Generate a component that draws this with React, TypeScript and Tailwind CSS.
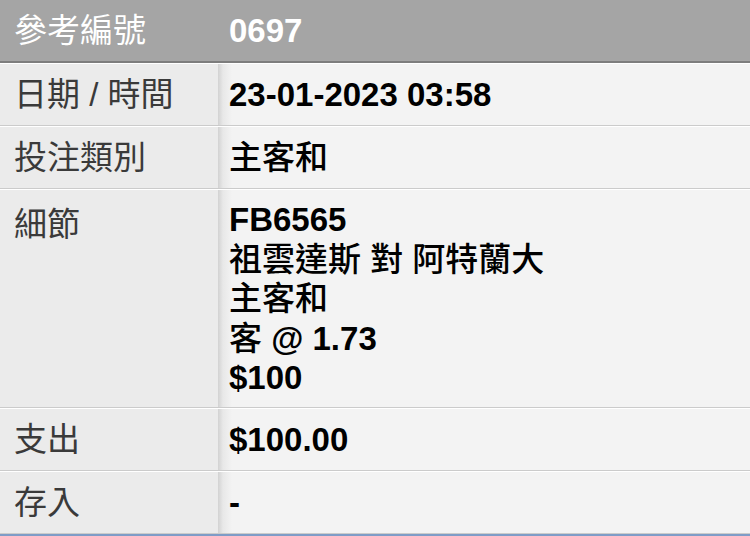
import React from "react";

const font = { fontFamily: '"Liberation Sans", "Noto Sans CJK TC", sans-serif' };

function Row({ label, children, tall }: { label: string; children: React.ReactNode; tall?: boolean }) {
  return (
    <div className="flex border-t border-t-white border-b border-b-[#cbcbcb]">
      <div
        className={`w-[218px] shrink-0 bg-[#ebebeb] pl-[14px] text-[33px] text-[#3a3a3a] ${
          tall ? "pt-[10px] h-[217px]" : "h-[61px] flex items-center"
        }`}
      >
        {label}
      </div>
      <div
        className={`flex-1 bg-[linear-gradient(to_right,#d2d2d2,#e8e8e8_5px,#f3f3f3_14px)] pl-[11px] text-[33px] font-bold text-black ${
          tall ? "pt-[10px] h-[217px] leading-[39.5px]" : "h-[61px] flex items-center"
        }`}
      >
        {children}
      </div>
    </div>
  );
}

const C = ({ children }: { children: React.ReactNode }) => <span className="font-medium">{children}</span>;

export default function App() {
  return (
    <div className="w-[750px] h-[536px] overflow-hidden bg-[#f3f3f3]" style={font}>
      <div className="h-[63px] flex items-center bg-[#a5a5a5] border-b-2 border-b-[#7d7d7d] text-white text-[33px]">
        <div className="w-[218px] pl-[14px]">參考編號</div>
        <div className="pl-[11px] font-bold">0697</div>
      </div>
      <Row label="日期 / 時間">23-01-2023 03:58</Row>
      <Row label="投注類別">
        <C>主客和</C>
      </Row>
      <Row label="細節" tall>
        <div>FB6565</div>
        <div>
          <C>祖雲達斯 對 阿特蘭大</C>
        </div>
        <div>
          <C>主客和</C>
        </div>
        <div>
          <C>客</C> @ 1.73
        </div>
        <div>$100</div>
      </Row>
      <Row label="支出">$100.00</Row>
      <Row label="存入">-</Row>
      <div className="h-[3px] bg-[#7e9cc7]" />
    </div>
  );
}
